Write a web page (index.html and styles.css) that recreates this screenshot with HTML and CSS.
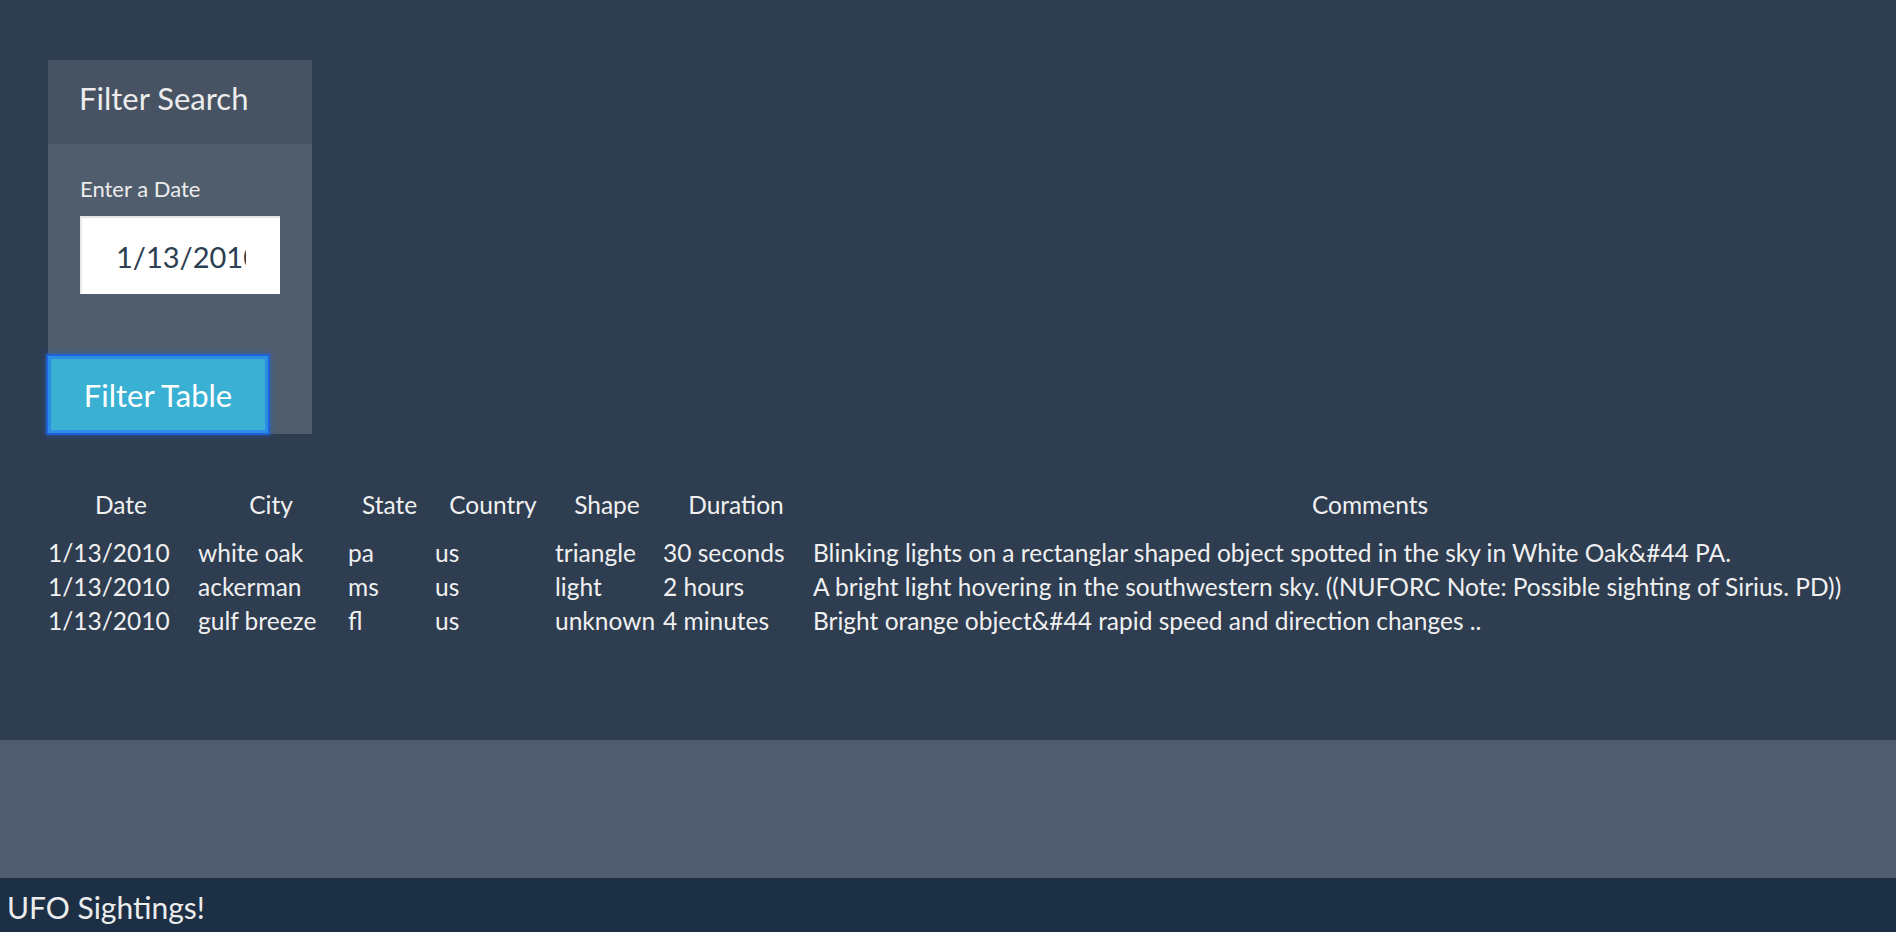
FILE: index.html
```html
<!DOCTYPE html>
<html lang="en">
<head>
<meta charset="utf-8">
<title>UFO Sightings</title>
<link rel="stylesheet" href="styles.css">
</head>
<body>
<div class="page">
  <main class="content">
    <aside class="filter-panel">
      <div class="filter-head">Filter Search</div>
      <div class="filter-body">
        <label class="filter-label" for="datetime">Enter a Date</label>
        <input class="filter-input" id="datetime" type="text" value="1/13/2010">
      </div>
      <button class="filter-btn" type="button">Filter Table</button>
    </aside>
    <table class="ufo-table">
      <thead>
        <tr>
          <th class="c-date">Date</th>
          <th class="c-city">City</th>
          <th class="c-state">State</th>
          <th class="c-country">Country</th>
          <th class="c-shape">Shape</th>
          <th class="c-duration">Duration</th>
          <th class="c-comments">Comments</th>
        </tr>
      </thead>
      <tbody>
        <tr>
          <td>1/13/2010</td><td>white oak</td><td>pa</td><td>us</td><td>triangle</td><td>30 seconds</td>
          <td>Blinking lights on a rectanglar shaped object spotted in the sky in White Oak&amp;#44 PA.</td>
        </tr>
        <tr>
          <td>1/13/2010</td><td>ackerman</td><td>ms</td><td>us</td><td>light</td><td>2 hours</td>
          <td>A bright light hovering in the southwestern sky. ((NUFORC Note: Possible sighting of Sirius. PD))</td>
        </tr>
        <tr>
          <td>1/13/2010</td><td>gulf breeze</td><td>fl</td><td>us</td><td>unknown</td><td>4 minutes</td>
          <td>Bright orange object&amp;#44 rapid speed and direction changes ..</td>
        </tr>
      </tbody>
    </table>
  </main>
  <div class="band"></div>
  <footer class="footer">UFO Sightings!</footer>
</div>
</body>
</html>
```
FILE: styles.css
```css
html, body {
  margin: 0;
  padding: 0;
  height: 100%;
  overflow: hidden;
}
body {
  font-family: Lato, "Open Sans", sans-serif;
  background: #2e3d50;
  color: #ededed;
}
.page {
  display: flex;
  flex-direction: column;
  height: 932px;
}
.content {
  height: 740px;
  box-sizing: border-box;
  padding: 60px 0 0 48px;
  background: #2e3d50;
  overflow: hidden;
}
.filter-panel {
  width: 264px;
  height: 374px;
  background: #505d6d;
  display: flex;
  flex-direction: column;
}
.filter-head {
  height: 84px;
  box-sizing: border-box;
  padding: 20px 0 0 31px;
  background: #475363;
  font-size: 31px;
  line-height: 37px;
  color: #ececec;
}
.filter-body {
  padding: 32px 0 0 32px;
  display: flex;
  flex-direction: column;
  align-items: flex-start;
}
.filter-label {
  font-size: 22px;
  line-height: 26px;
  color: #ececec;
}
.filter-input {
  margin-top: 14px;
  width: 200px;
  height: 78px;
  box-sizing: border-box;
  padding: 0 34px 0 34px;
  border: none;
  border-top: 2px solid #e4e4e4;
  border-left: 2px solid #e9e9e9;
  background: #ffffff;
  font-family: Lato, "Open Sans", sans-serif;
  font-size: 29px;
  color: #2c3e50;
  outline: none;
}
.filter-btn {
  margin-top: 62px;
  width: 220px;
  height: 77px;
  box-sizing: border-box;
  background: #3ab0d3;
  border: 3px solid #2b8de6;
  box-shadow: 0 0 0 2px #1d63d6, 0 0 5px 3px rgba(30, 100, 225, 0.45);
  color: #ffffff;
  font-family: Lato, "Open Sans", sans-serif;
  font-size: 31px;
  padding: 0;
  cursor: pointer;
}
.ufo-table {
  margin: 53px 0 0 -3px;
  table-layout: fixed;
  width: 1885px;
  border-spacing: 2px;
  font-size: 24.5px;
  line-height: 30px;
  color: #f0f0f0;
}
.ufo-table th,
.ufo-table td {
  padding: 1px;
  white-space: nowrap;
  overflow: hidden;
}
.ufo-table th {
  box-sizing: border-box;
  font-weight: 400;
  text-align: center;
  padding-bottom: 15px;
}
.ufo-table td {
  text-align: left;
}
.c-date { width: 148px; }
.c-city { width: 148px; }
.c-state { width: 85px; }
.c-country { width: 118px; }
.c-shape { width: 106px; }
.c-duration { width: 148px; }
.c-comments { width: 1116px; }
.band {
  height: 138px;
  background: #4f5c6d;
}
.footer {
  height: 54px;
  box-sizing: border-box;
  padding: 11px 0 0 7px;
  background: #1c2f44;
  font-size: 30px;
  line-height: 37px;
  color: #ececec;
}
```
